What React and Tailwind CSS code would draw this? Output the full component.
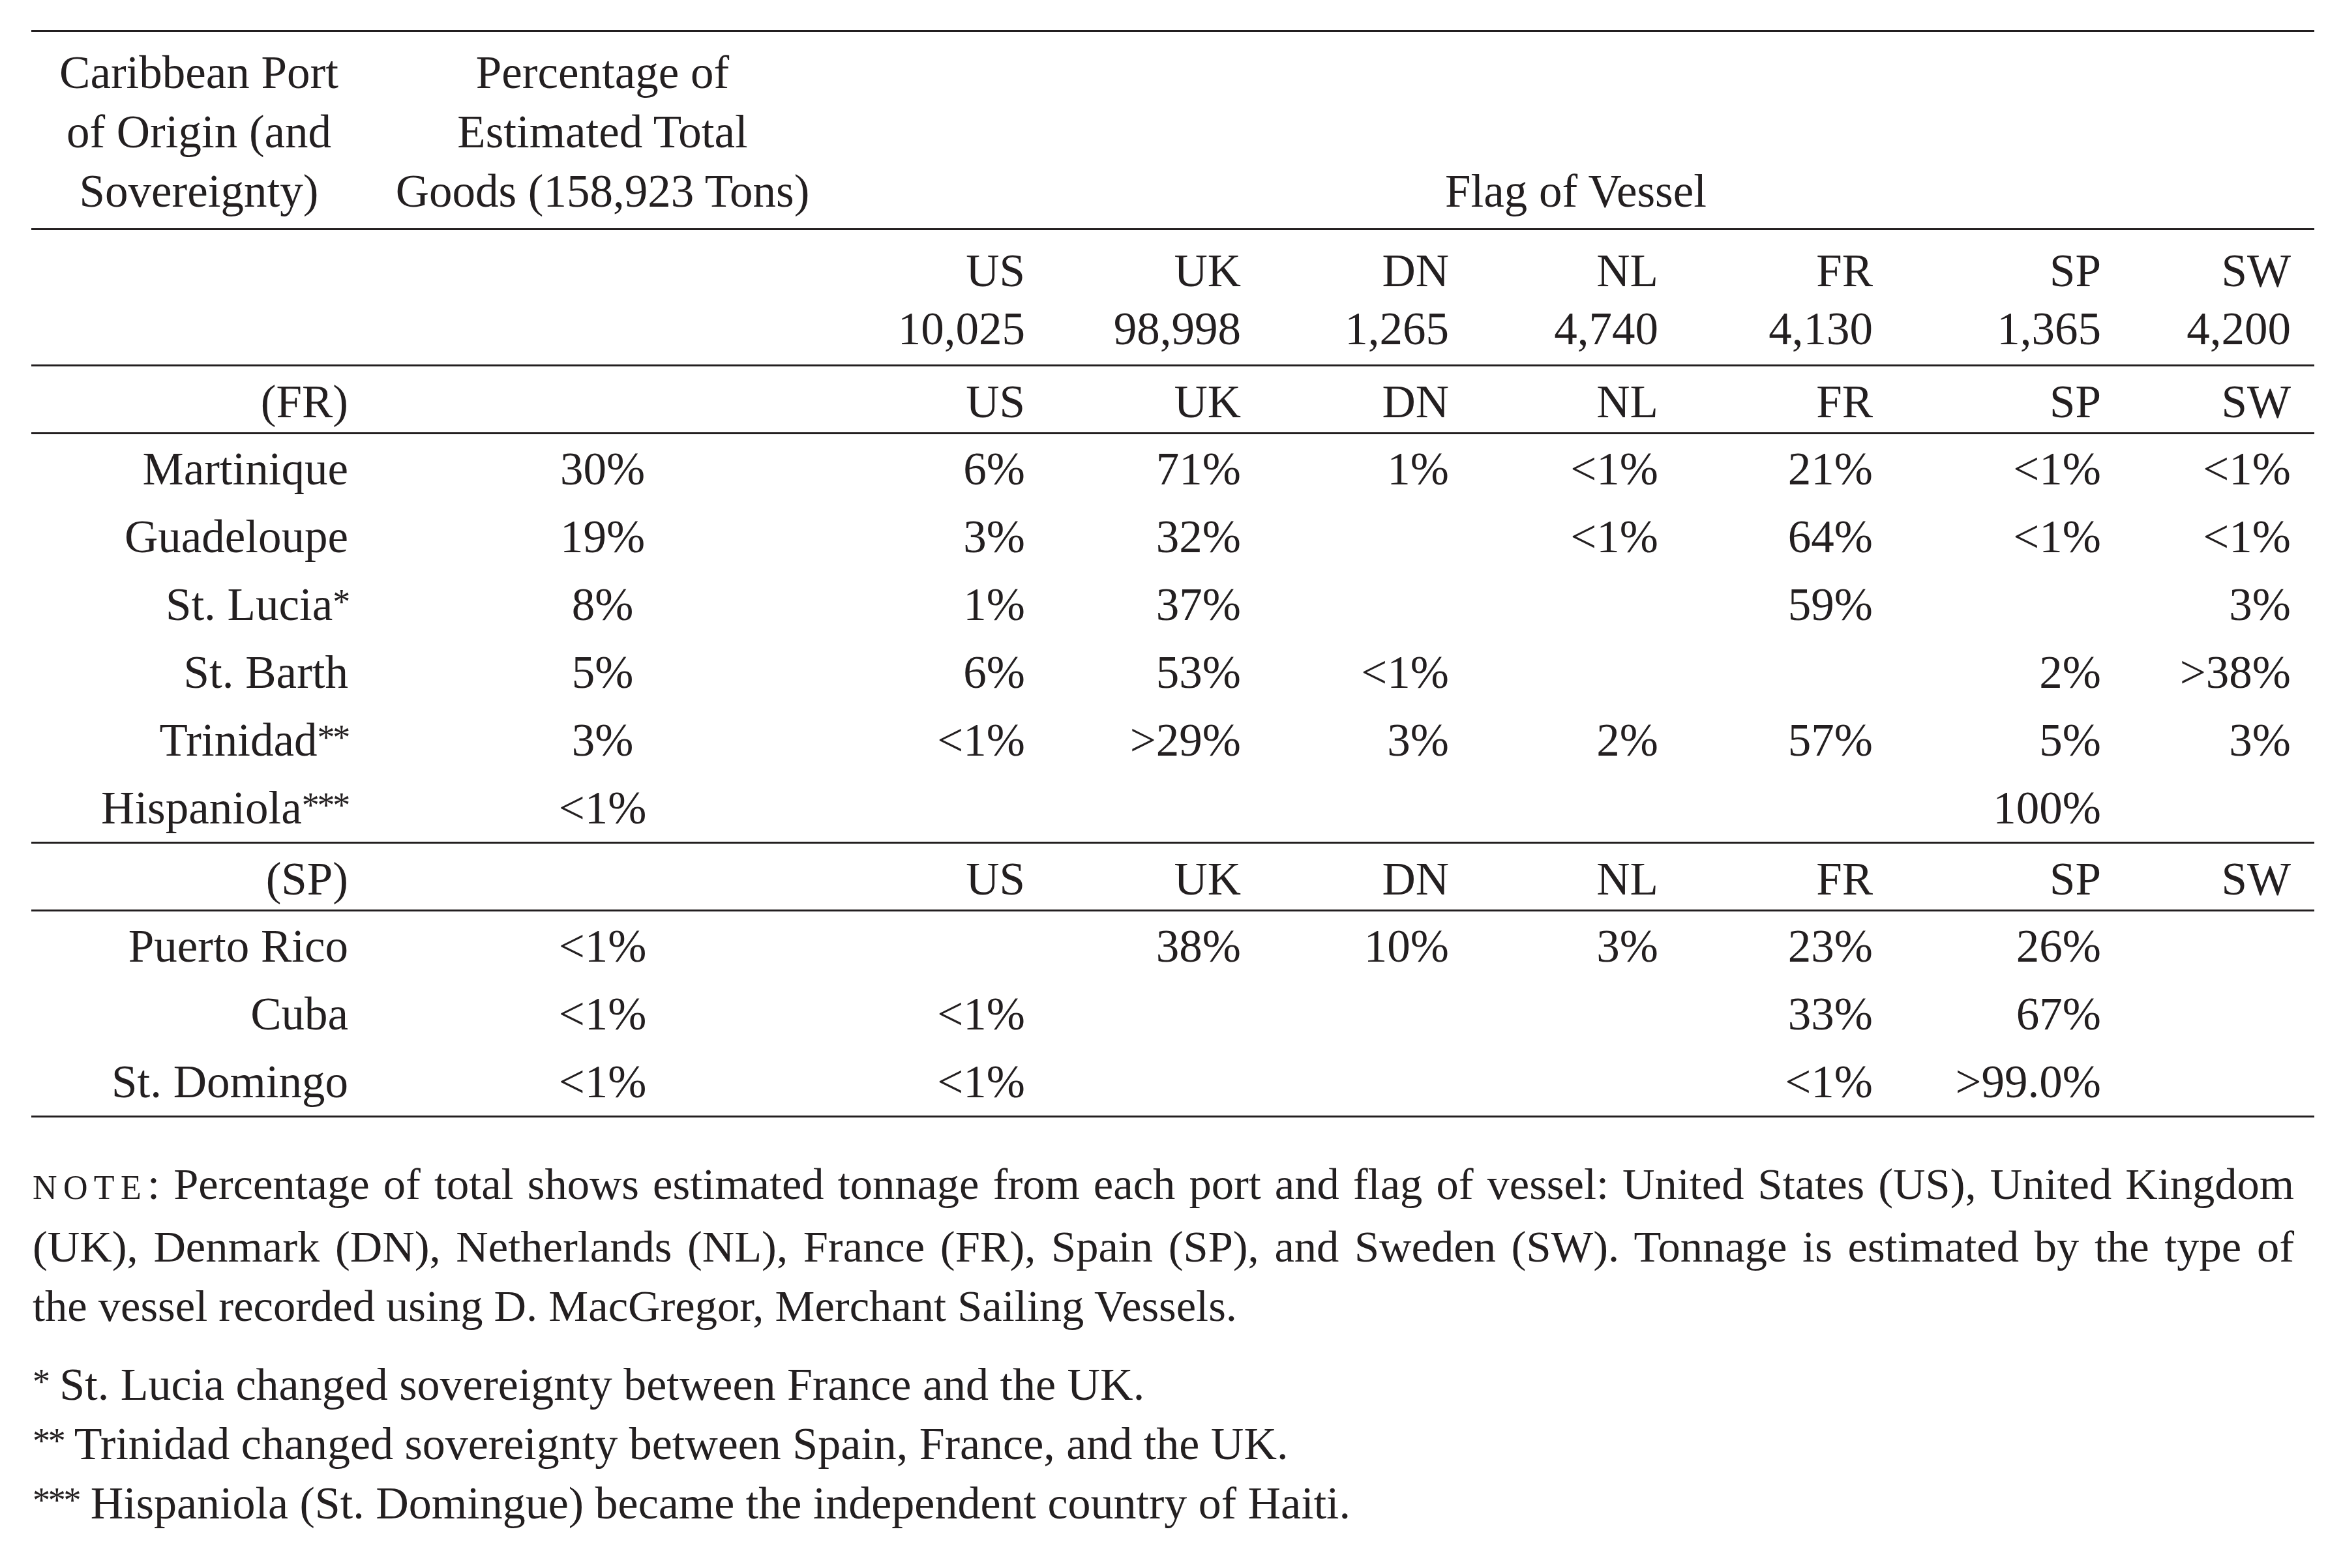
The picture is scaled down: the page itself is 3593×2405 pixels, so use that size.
import React from 'react'

const flags = [
  ['US', '10,025'],
  ['UK', '98,998'],
  ['DN', '1,265'],
  ['NL', '4,740'],
  ['FR', '4,130'],
  ['SP', '1,365'],
  ['SW', '4,200'],
]

const french = [
  ['Martinique', '', '30%', ['6%', '71%', '1%', '<1%', '21%', '<1%', '<1%']],
  ['Guadeloupe', '', '19%', ['3%', '32%', '', '<1%', '64%', '<1%', '<1%']],
  ['St. Lucia', '*', '8%', ['1%', '37%', '', '', '59%', '', '3%']],
  ['St. Barth', '', '5%', ['6%', '53%', '<1%', '', '', '2%', '>38%']],
  ['Trinidad', '**', '3%', ['<1%', '>29%', '3%', '2%', '57%', '5%', '3%']],
  ['Hispaniola', '***', '<1%', ['', '', '', '', '', '100%', '']],
]

const spanish = [
  ['Puerto Rico', '', '<1%', ['', '38%', '10%', '3%', '23%', '26%', '']],
  ['Cuba', '', '<1%', ['<1%', '', '', '', '33%', '67%', '']],
  ['St. Domingo', '', '<1%', ['<1%', '', '', '', '<1%', '>99.0%', '']],
]

const cols = 'grid grid-cols-[516px_720px_324px_331px_319px_321px_329px_350px_291px]'

function Rule() {
  return <div className="h-[3px] bg-[#231f20]" />
}

// small raised asterisks, as set in the printed table
function Stars({ n }) {
  if (!n) return null
  return <span className="text-[54px] leading-none tracking-[-0.06em] align-[10px]">{n}</span>
}

function SectionRow({ label }) {
  return (
    <div className={`${cols} pt-[9px] pb-[1px] leading-[91px]`}>
      <div className="text-right pr-[30px]">({label})</div>
      <div />
      {flags.map(([f]) => (
        <div key={f} className="text-right pr-[36px]">{f}</div>
      ))}
    </div>
  )
}

function DataRows({ rows }) {
  return (
    <div className="pt-[1px]">
      {rows.map(([port, stars, pct, vals]) => (
        <div key={port} className={`${cols} h-[104px] leading-[104px]`}>
          <div className="text-right pr-[30px]">
            {port}
            <Stars n={stars} />
          </div>
          <div className="text-center">{pct}</div>
          {vals.map((v, i) => (
            <div key={i} className="text-right pr-[36px]">{v}</div>
          ))}
        </div>
      ))}
    </div>
  )
}

export default function App() {
  return (
    <div className="min-h-screen bg-white text-[#231f20] font-['Liberation_Serif','Times_New_Roman',serif] pt-[46px] pl-[48px]">
      <div className="w-[3501px] text-[71px]">
        <Rule />
        <div className={`${cols} pt-[17px] pb-[11px] leading-[91px]`}>
          <div className="text-center pr-[2px]">
            Caribbean Port
            <br />
            of Origin (and
            <br />
            Sovereignty)
          </div>
          <div className="text-center">
            Percentage of
            <br />
            Estimated Total
            <br />
            Goods (158,923 Tons)
          </div>
          <div className="col-span-7 flex items-end justify-center">Flag of Vessel</div>
        </div>
        <Rule />
        <div className={`${cols} pt-[18px] pb-[10px] leading-[89px]`}>
          <div />
          <div />
          {flags.map(([f, n]) => (
            <div key={f} className="text-right pr-[36px]">
              {f}
              <br />
              {n}
            </div>
          ))}
        </div>
        <Rule />
        <SectionRow label="FR" />
        <Rule />
        <DataRows rows={french} />
        <Rule />
        <SectionRow label="SP" />
        <Rule />
        <DataRows rows={spanish} />
        <Rule />
      </div>

      <div className="ml-[2px] w-[3468px] text-[68.5px] leading-[91px] mt-[57px]">
        <div className="whitespace-nowrap text-justify [text-align-last:justify]">
          <span className="text-[52px] tracking-[0.18em]">NOTE</span>: Percentage of total shows estimated tonnage from each port and flag of vessel: United States (US), United Kingdom
        </div>
        <div className="whitespace-nowrap text-justify [text-align-last:justify]">
          (UK), Denmark (DN), Netherlands (NL), France (FR), Spain (SP), and Sweden (SW). Tonnage is estimated by the type of
        </div>
        <div className="whitespace-nowrap">the vessel recorded using D. MacGregor, Merchant Sailing Vessels.</div>
      </div>

      <div className="ml-[2px] text-[70px] leading-[91px] mt-[29px]">
        <div>
          <Stars n="*" /> St. Lucia changed sovereignty between France and the UK.
        </div>
        <div>
          <Stars n="**" /> Trinidad changed sovereignty between Spain, France, and the UK.
        </div>
        <div>
          <Stars n="***" /> Hispaniola (St. Domingue) became the independent country of Haiti.
        </div>
      </div>
    </div>
  )
}
